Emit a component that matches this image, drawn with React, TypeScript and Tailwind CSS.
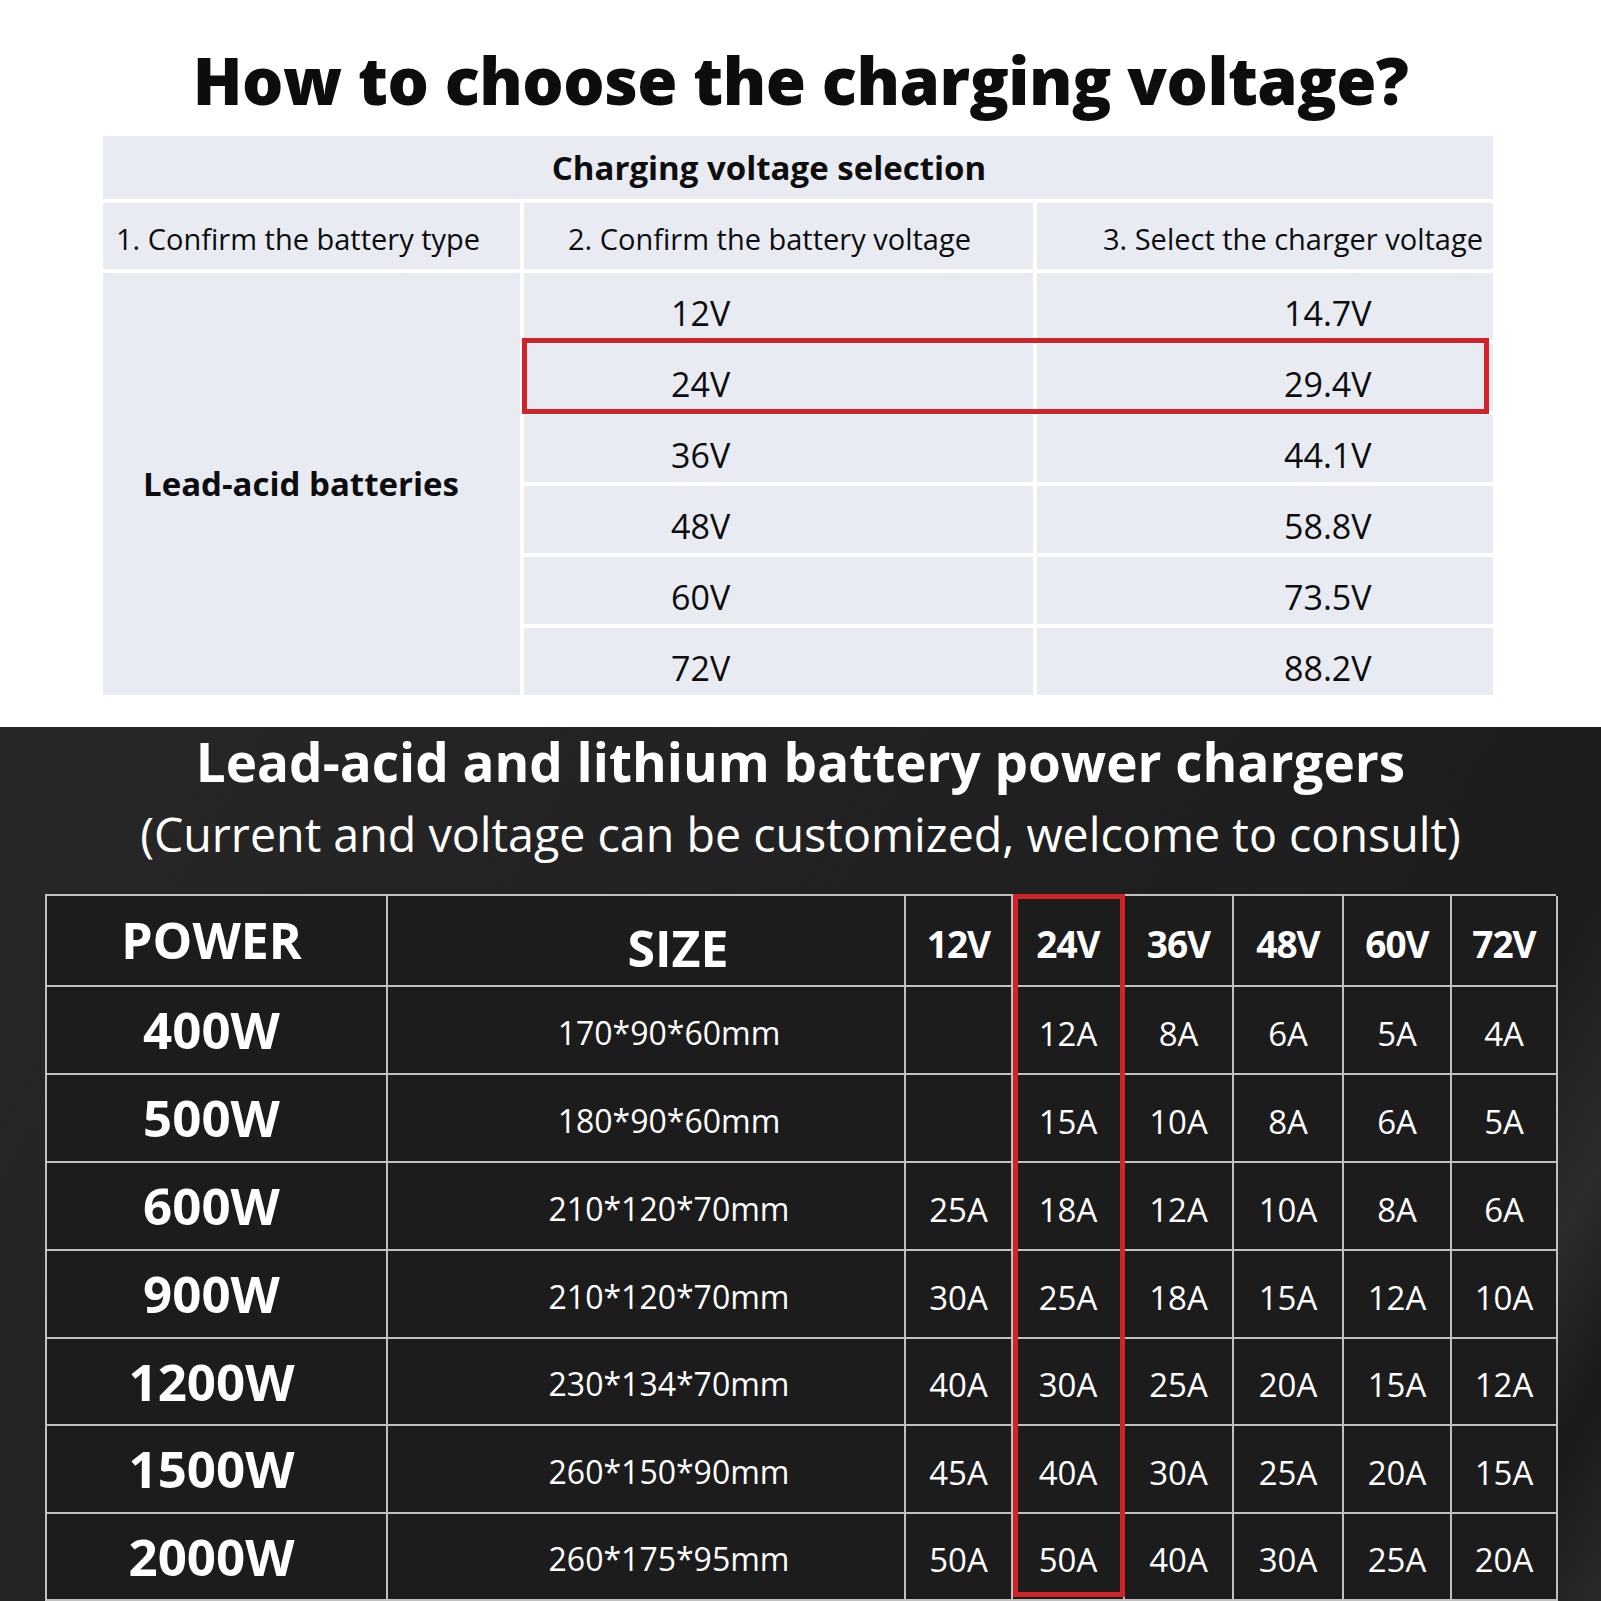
import React from 'react';

const batteryRows = [
  { battery: '12V', charger: '14.7V' },
  { battery: '24V', charger: '29.4V' },
  { battery: '36V', charger: '44.1V' },
  { battery: '48V', charger: '58.8V' },
  { battery: '60V', charger: '73.5V' },
  { battery: '72V', charger: '88.2V' },
];

const voltages = ['12V', '24V', '36V', '48V', '60V', '72V'];

const chargers = [
  { power: '400W', size: '170*90*60mm', amps: ['', '12A', '8A', '6A', '5A', '4A'], h: 'h-[88px]' },
  { power: '500W', size: '180*90*60mm', amps: ['', '15A', '10A', '8A', '6A', '5A'], h: 'h-[88px]' },
  { power: '600W', size: '210*120*70mm', amps: ['25A', '18A', '12A', '10A', '8A', '6A'], h: 'h-[88px]' },
  { power: '900W', size: '210*120*70mm', amps: ['30A', '25A', '18A', '15A', '12A', '10A'], h: 'h-[88px]' },
  { power: '1200W', size: '230*134*70mm', amps: ['40A', '30A', '25A', '20A', '15A', '12A'], h: 'h-[87px]' },
  { power: '1500W', size: '260*150*90mm', amps: ['45A', '40A', '30A', '25A', '20A', '15A'], h: 'h-[88px]' },
  { power: '2000W', size: '260*175*95mm', amps: ['50A', '50A', '40A', '30A', '25A', '20A'], h: 'h-[87px]' },
];

const cell = 'border-r-2 border-b-2 border-[#c0c0c0] bg-[#1c1c1c] flex items-center justify-center';

const VoltageGuide = () => (
  <section className="h-[727px] bg-white text-[#0d0d0d]">
    <div className="h-[136px] pt-[48px]">
      <h1 className="text-center text-[65px] leading-none font-extrabold tracking-[-0.5px]">
        How to choose the charging voltage?
      </h1>
    </div>

    <div className="relative ml-[103px] w-[1390px] grid grid-cols-[417px_509px_456px] grid-rows-[63px_66px_repeat(6,67px)] gap-[4px]">
      <div className="col-span-3 bg-[#e8ebf2] flex items-center justify-center pr-[58px] text-[33px] font-bold">
        Charging voltage selection
      </div>

      <div className="bg-[#e8ebf2] flex items-center pl-[13px] pt-[6px] text-[29px]">1. Confirm the battery type</div>
      <div className="bg-[#e8ebf2] flex items-center pl-[44px] pt-[6px] text-[29px]">2. Confirm the battery voltage</div>
      <div className="bg-[#e8ebf2] flex items-center justify-end pr-[10px] pt-[6px] text-[29px]">3. Select the charger voltage</div>

      <div className="row-span-6 bg-[#e8ebf2] flex items-center pl-[40px] text-[33px] font-bold">
        Lead-acid batteries
      </div>
      {batteryRows.map((r) => (
        <React.Fragment key={r.battery}>
          <div className="col-start-2 bg-[#e8ebf2] flex items-center pl-[147px] pt-[14px] text-[34px]">{r.battery}</div>
          <div className="col-start-3 bg-[#e8ebf2] flex items-center pl-[247px] pt-[14px] text-[34px]">{r.charger}</div>
        </React.Fragment>
      ))}

      {/* highlight for 24V */}
      <div className="absolute left-[419px] top-[202px] w-[967px] h-[76px] border-[5px] border-[#d22428]" />
    </div>
  </section>
);

const ChargerTable = () => (
  <section className="h-[874px] bg-[linear-gradient(120deg,#272727_0%,#202020_55%,#1c1c1c_80%,#2c2c2c_88%,#1a1a1a_94%,#2a2a2a_100%)] text-white">
    <div className="pt-[8px] text-center">
      <h2 className="text-[53px] leading-none font-bold">Lead-acid and lithium battery power chargers</h2>
      <p className="mt-[23px] text-[46.6px] leading-none">(Current and voltage can be customized, welcome to consult)</p>
    </div>

    <div className="relative mt-[36px] ml-[45px] w-[1511px] border-l-2 border-t-2 border-[#c0c0c0]">
      <div className="grid grid-cols-[341px_518px_107px_112px_109px_110px_108px_106px]">
        <div className={`${cell} h-[91px] pr-[10px] text-[50px] font-bold`}>POWER</div>
        <div className={`${cell} h-[91px] pl-[64px] pt-[16px] text-[50px] font-bold`}>SIZE</div>
        {voltages.map((v) => (
          <div key={v} className={`${cell} h-[91px] pt-[8px] text-[37px] font-bold tracking-[-1px]`}>{v}</div>
        ))}

        {chargers.map((c) => (
          <React.Fragment key={c.power}>
            <div className={`${cell} ${c.h} pr-[10px] text-[51px] font-bold`}>{c.power}</div>
            <div className={`${cell} ${c.h} pl-[46px] pt-[6px] text-[32px]`}>{c.size}</div>
            {c.amps.map((a, i) => (
              <div key={i} className={`${cell} ${c.h} pt-[8px] text-[33px]`}>{a}</div>
            ))}
          </React.Fragment>
        ))}
      </div>

      {/* highlight for 24V column */}
      <div className="absolute left-[966px] top-[-2px] w-[112px] h-[703px] border-[5px] border-[#d22428]" />
    </div>
  </section>
);

export default function App() {
  return (
    <div className="w-[1601px] h-[1601px] overflow-hidden font-['Open_Sans',sans-serif]">
      <VoltageGuide />
      <ChargerTable />
    </div>
  );
}
